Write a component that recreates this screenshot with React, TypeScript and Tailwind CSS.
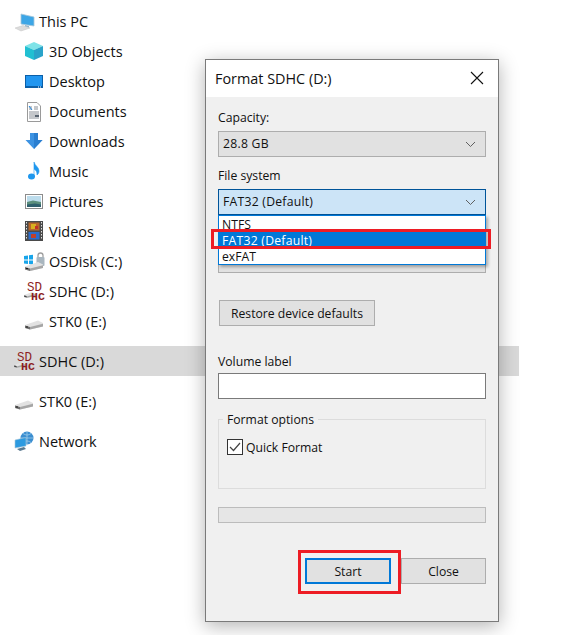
import { ReactNode } from 'react';

const DriveShape = ({ y = 0 }: { y?: number }) => (
  <g transform={`translate(0 ${y})`}>
    <polygon points="0,4.5 13,0 18,2.5 18,6 5,9 0,7.5" fill="#e2e2e2" />
    <polygon points="0,5 5,6.5 5,9 0,7.5" fill="#6f6f6f" />
    <polygon points="5,6.5 18,3.2 18,6 5,9" fill="#a6a6a6" />
    <rect x="1" y="6" width="2" height="1" fill="#1f1f1f" />
  </g>
);

const IconBox = ({ children }: { children: ReactNode }) => (
  <svg width="20" height="20" viewBox="0 0 20 20" className="shrink-0 overflow-visible">
    {children}
  </svg>
);

const ThisPcIcon = () => (
  <IconBox>
    <polygon points="6,3 19,6 19,15 6,13" fill="#3da6e6" stroke="#a8c6d8" strokeWidth="0.8" />
    <polygon points="10,14 14,15 14,17 10,16" fill="#8fb4cc" />
    <polygon points="0,17 8,14.5 15,17 6,20" fill="#dcdcdc" stroke="#c4c4c4" strokeWidth="0.5" />
  </IconBox>
);

const ObjectsIcon = () => (
  <IconBox>
    <polygon points="9,1 18,5 9,9 0,5" fill="#7fe3e8" />
    <polygon points="0,5 9,9 9,19 0,15" fill="#21c0d2" />
    <polygon points="18,5 9,9 9,19 18,15" fill="#2aa3c9" />
  </IconBox>
);

const DesktopIcon = () => (
  <IconBox>
    <rect x="0" y="4" width="18" height="13" fill="#0b5fa8" />
    <rect x="1" y="5" width="16" height="10" fill="#2196f0" />
    <rect x="13" y="15.5" width="1" height="1" fill="#fff" />
    <rect x="15" y="15.5" width="1" height="1" fill="#fff" />
  </IconBox>
);

const DocumentsIcon = () => (
  <IconBox>
    <polygon points="2.5,1.5 12,1.5 15.5,5 15.5,20.5 2.5,20.5" fill="#fff" stroke="#9a9a9a" />
    <path d="M4 6h3M4 8h3M9 6h4M9 8h4M4 11h10M4 13h10M4 15h6M4 17h10" stroke="#8a8f96" fill="none" />
    <path d="M4 5l3 4" stroke="#1e88e5" fill="none" />
    <rect x="10" y="14" width="4" height="2" fill="#5a6470" />
  </IconBox>
);

const DownloadsIcon = () => (
  <IconBox>
    <polygon points="5,2 13,2 13,9 17.5,9 9,18 0.5,9 5,9" fill="#3d93e2" />
    <polygon points="9,2 13,2 13,9 17.5,9 9,18" fill="#2b7fd0" />
  </IconBox>
);

const MusicIcon = () => (
  <IconBox>
    <ellipse cx="6.5" cy="15.500" rx="3.5" ry="3" fill="#1e97ee" />
    <path d="M9 16V1c1 4 5 5 5 9 0 2-1 3-2 4 .3-3-1-5-3-6" fill="#1e97ee" stroke="#1e97ee" strokeWidth="0.6" />
  </IconBox>
);

const PicturesIcon = () => (
  <IconBox>
    <rect x="0.5" y="3.5" width="17" height="14" fill="#fff" stroke="#8c8c8c" />
    <rect x="2" y="5" width="14" height="11" fill="#bcdcec" />
    <polygon points="2,11 8,9.5 16,11 16,16 2,16" fill="#5c8f7c" />
    <polygon points="2,13.5 10,12.5 16,13.5 16,16 2,16" fill="#2f5f6c" />
  </IconBox>
);

const VideosIcon = () => (
  <IconBox>
    <rect x="0" y="0" width="18" height="20" fill="#4a4a4a" />
    <path d="M1.5 1v18M16.5 1v18" stroke="#e0e0e0" strokeDasharray="1.5 1.5" fill="none" />
    <rect x="3.5" y="1.5" width="11" height="8" fill="#b8662a" />
    <rect x="6" y="3" width="5" height="5" fill="#d8b020" />
    <rect x="10" y="5" width="3" height="3" fill="#c0302a" />
    <rect x="3.5" y="11" width="11" height="7.5" fill="#2a6ccc" />
    <rect x="6" y="13" width="5" height="4" fill="#c0402a" />
  </IconBox>
);

const OsDiskIcon = () => (
  <IconBox>
    <path d="M-1 5l4-.6V8.5H-1zM4 4.3L8 3.7V8.5H4zM-1 9.5h4V13l-4-.6zM4 9.5h4v4.2l-4-.6z" fill="#18a5ea" />
    <path d="M13 6V4.5a2.5 2.5 0 0 1 5 0V6" stroke="#a0a0a0" strokeWidth="1.3" fill="none" />
    <rect x="11.5" y="6" width="8" height="9" rx="1" fill="#a9b6bf" />
    <DriveShape y={11} />
  </IconBox>
);

const SdIcon = () => (
  <IconBox>
    <g transform="translate(-1 11) scale(0.65)">
      <DriveShape />
    </g>
    <text fontFamily="'Liberation Mono', monospace" fill="#8d1d22">
      <tspan x="2" y="9.5" fontSize="12.500">SD</tspan>
      <tspan x="6" y="19" fontSize="11.500" fontWeight="700">HC</tspan>
    </text>
  </IconBox>
);

const DriveIcon = () => (
  <IconBox>
    <DriveShape y={9.5} />
  </IconBox>
);

const NetworkIcon = () => (
  <IconBox>
    <circle cx="12" cy="7" r="6.5" fill="#3b8ed0" />
    <path d="M6 7h12M12 .5v13M8 2.5c3 2 5 2 8 0M8 11.500c3-2 5-2 8 0" stroke="#a9d4ee" strokeWidth="0.7" fill="none" />
    <polygon points="0,9 11,6.500 11,15 0,17" fill="#2c9ae0" stroke="#a8c6d8" strokeWidth="0.6" />
    <polygon points="2,18 9,16 11,18 5,20" fill="#5a7a90" />
  </IconBox>
);

const Row = ({ icon, label, child, selected }: { icon: ReactNode; label: string; child?: boolean; selected?: boolean }) => (
  <div className={`flex h-[30px] items-center ${child ? 'pl-[25px]' : 'pl-[15px]'} ${selected ? 'bg-[#d9d9d9]' : ''}`}>
    <span className="w-[24px] shrink-0">{icon}</span>
    <span className="pt-[2px] text-[14.5px] text-[#111]">{label}</span>
  </div>
);

const Chevron = () => (
  <svg width="11" height="7" viewBox="0 0 11 7" className="shrink-0">
    <path d="M1 1l4.5 4.5L10 1" stroke="#606060" fill="none" />
  </svg>
);

const Select = ({ value, open }: { value: string; open?: boolean }) => (
  <div className={`flex h-[26px] items-center justify-between border pl-[4px] pr-[9px] ${open ? 'border-[#005499] bg-[#cce4f7]' : 'border-[#adadad] bg-[#e1e1e1]'}`}>
    <span className="tracking-[0.25px]">{value}</span>
    <Chevron />
  </div>
);

export default function App() {
  return (
    <div className="relative h-[635px] w-[583px] overflow-hidden bg-white font-['Open_Sans',sans-serif] text-[12.2px] text-[#111]">
      {/* Explorer tree */}
      <div className="w-[519px] pt-[6px]">
        <Row icon={<ThisPcIcon />} label="This PC" />
        <Row child icon={<ObjectsIcon />} label="3D Objects" />
        <Row child icon={<DesktopIcon />} label="Desktop" />
        <Row child icon={<DocumentsIcon />} label="Documents" />
        <Row child icon={<DownloadsIcon />} label="Downloads" />
        <Row child icon={<MusicIcon />} label="Music" />
        <Row child icon={<PicturesIcon />} label="Pictures" />
        <Row child icon={<VideosIcon />} label="Videos" />
        <Row child icon={<OsDiskIcon />} label="OSDisk (C:)" />
        <Row child icon={<SdIcon />} label="SDHC (D:)" />
        <Row child icon={<DriveIcon />} label="STK0 (E:)" />
        <div className="mt-[10px] flex flex-col gap-[10px]">
          <Row selected icon={<SdIcon />} label="SDHC (D:)" />
          <Row icon={<DriveIcon />} label="STK0 (E:)" />
          <Row icon={<NetworkIcon />} label="Network" />
        </div>
      </div>

      {/* Format dialog */}
      <div className="absolute left-[205px] top-[59px] flex h-[563px] w-[294px] flex-col border border-[#7a7a7a] bg-[#f0f0f0] shadow-[0_4px_18px_rgba(0,0,0,0.3)]">
        <div className="flex h-[37px] shrink-0 items-center justify-between bg-white pl-[9px] pr-[14px]">
          <span className="text-[14.4px]">Format SDHC (D:)</span>
          <svg width="14" height="14" viewBox="0 0 14 14" className="mb-[1px]">
            <path d="M1 1l12 12M13 1L1 13" stroke="#111" strokeWidth="1.1" fill="none" />
          </svg>
        </div>

        <div className="flex flex-1 flex-col px-[12px]">
          <div className="mt-[13px] flex h-[17px] items-center">Capacity:</div>
          <div className="mt-[4px]">
            <Select value="28.8 GB" />
          </div>
          <div className="mt-[11px] flex h-[17px] items-center">File system</div>
          <div className="relative mt-[4px]">
            <Select open value="FAT32 (Default)" />
            {/* Open list */}
            <div className="absolute left-0 right-0 top-[26px] z-10 flex h-[50px] flex-col border border-[#0078d7] bg-white shadow-[2px_2px_3px_rgba(0,0,0,0.3)]">
              <div className="flex h-[16px] items-center px-[3px] pt-[2px]">NTFS</div>
              <div className="flex h-[16px] items-center bg-[#0078d7] px-[3px] pt-[2px] tracking-[0.25px] text-white">FAT32 (Default)</div>
              <div className="flex h-[16px] items-center px-[3px] pt-[2px]">exFAT</div>
            </div>
          </div>
          {/* Allocation size select hidden behind the list */}
          <div className="mt-[32px] h-[26px] border border-[#adadad] bg-[#e1e1e1]" />

          <button className="ml-px mt-[27px] h-[26px] w-[156px] self-start border border-[#adadad] bg-[#e1e1e1] pt-[2px]">
            Restore device defaults
          </button>

          <div className="mt-[27px] flex h-[17px] items-center pt-[2px]">Volume label</div>
          <div className="mt-[3px] h-[26px] border border-[#7a7a7a] bg-white" />

          <div className="relative mt-[20px] h-[70px] border border-[#dcdcdc] pl-[8px] pt-[19px]">
            <span className="absolute left-[4px] top-[-9px] bg-[#f0f0f0] px-[4px] leading-[17px]">Format options</span>
            <div className="flex h-[16px] items-center gap-[3px]">
              <span className="flex h-[16px] w-[16px] items-center justify-center border border-[#333] bg-white">
                <svg width="12" height="10" viewBox="0 0 12 10">
                  <path d="M1 5l3.5 3.5L11 1" stroke="#444" strokeWidth="1.2" fill="none" />
                </svg>
              </span>
              <span className="pt-[2px]">Quick Format</span>
            </div>
          </div>

          <div className="mt-[18px] h-[16px] border border-[#bcbcbc] bg-[#e6e6e6]" />

          <div className="mt-[35px] flex justify-end gap-[10px]">
            <button className="h-[26px] w-[86px] border-2 border-[#0078d7] bg-[#e1e1e1] pt-[2px]">Start</button>
            <button className="h-[26px] w-[85px] border border-[#adadad] bg-[#e1e1e1] pt-[2px]">Close</button>
          </div>
        </div>
      </div>

      {/* Red annotation boxes */}
      <div className="absolute left-[211px] top-[229px] z-20 h-[20px] w-[280px] border-[3px] border-[#ed1c24]" />
      <div className="absolute left-[298px] top-[550px] z-20 h-[44px] w-[103px] border-[3px] border-[#ed1c24]" />
    </div>
  );
}
